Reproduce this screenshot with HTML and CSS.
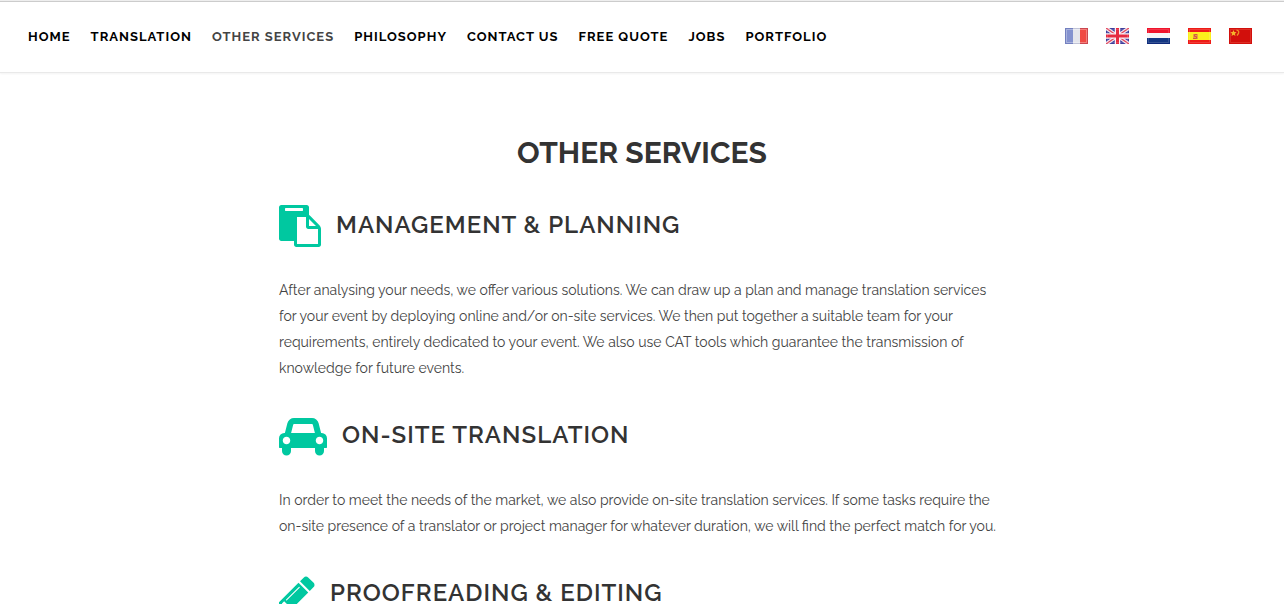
FILE: index.html
```html
<!DOCTYPE html>
<html lang="en">
<head>
<meta charset="utf-8">
<meta name="viewport" content="width=device-width, initial-scale=1">
<title>Other Services</title>
<link rel="stylesheet" href="styles.css">
</head>
<body>
<header class="site-header">
  <nav class="menu" aria-label="Main">
    <a href="#home">HOME</a>
    <a href="#translation">TRANSLATION</a>
    <a href="#services" class="current" aria-current="page">OTHER SERVICES</a>
    <a href="#philosophy">PHILOSOPHY</a>
    <a href="#contact">CONTACT US</a>
    <a href="#quote">FREE QUOTE</a>
    <a href="#jobs">JOBS</a>
    <a href="#portfolio">PORTFOLIO</a>
  </nav>
  <nav class="languages" aria-label="Language">
    <a href="#fr" aria-label="Français">
      <svg class="flag" viewBox="0 0 23 16"><path fill="#8492cf" d="M0 0h8v16H0z"/><path fill="#e4e5ec" d="M8 0h7v16H8z"/><path fill="#f04a44" d="M15 0h8v16h-8z"/><path fill="none" stroke="#fff" stroke-opacity=".3" d="M1.500 1.500h20v13h-20z"/><path fill="none" stroke="#333a80" stroke-opacity=".2" d="M.5.5h22v15H.5z"/></svg>
    </a>
    <a href="#en" aria-label="English">
      <svg class="flag" viewBox="0 0 23 16"><path fill="#3e3e9c" d="M0 0h23v16H0z"/><path stroke="#f3e6ee" stroke-width="3.600" d="M0 0l23 16M23 0L0 16"/><path stroke="#e2455a" stroke-width="1.300" d="M0 0l23 16M23 0L0 16"/><path stroke="#fbf0f4" stroke-width="5.500" d="M11.500 0v16M0 8h23"/><path stroke="#e52a40" stroke-width="3" d="M11.500 0v16M0 8h23"/><path fill="none" stroke="#fff" stroke-opacity=".15" d="M1.500 1.500h20v13h-20z"/></svg>
    </a>
    <a href="#nl" aria-label="Nederlands">
      <svg class="flag" viewBox="0 0 23 16"><path fill="#f0142c" d="M0 0h23v5H0z"/><path fill="#f5f5f7" d="M0 5h23v5H0z"/><path fill="#133682" d="M0 10h23v6H0z"/><path fill="none" stroke="#fff" stroke-opacity=".15" d="M1.500 1.500h20v13h-20z"/><path fill="none" stroke="#000060" stroke-opacity=".25" d="M0 15.500h23"/></svg>
    </a>
    <a href="#es" aria-label="Español">
      <svg class="flag" viewBox="0 0 23 16"><path fill="#ee1b16" d="M0 0h23v16H0z"/><path fill="#fbf01c" d="M0 4h23v8H0z"/><path fill="#eda43a" d="M5 6h5v5H5z"/><path fill="none" stroke="#d05a45" d="M9 6.500H6.500v2h2v2H5"/><path fill="none" stroke="#fff" stroke-opacity=".15" d="M1.500 1.500h20v13h-20z"/></svg>
    </a>
    <a href="#zh" aria-label="中文">
      <svg class="flag" viewBox="0 0 23 16"><path fill="#d20f0c" d="M0 0h23v16H0z"/><path fill="#f5b62b" d="M4.500 2l.9 2.100 2.200.2-1.700 1.400.6 2.300-2-1.200-2 1.200.6-2.300-1.700-1.400 2.200-.2z"/><path fill="none" stroke="#ef8d24" stroke-width="1.300" d="M7.500 2.200q3 .3 2 3.300L8 7.500"/><path fill="none" stroke="#ff8a70" stroke-opacity=".25" d="M1.500 1.500h20v13h-20z"/></svg>
    </a>
  </nav>
</header>
<main class="content">
  <h1>OTHER SERVICES</h1>
  <section class="service">
    <div class="service-title">
      <svg class="icon" viewBox="0 0 1792 1792" aria-hidden="true"><path d="M768 1664h896v-640h-416q-40 0-68-28t-28-68v-416h-384v1152zm256-1440v-64q0-13-9.500-22.500t-22.500-9.500h-704q-13 0-22.500 9.500t-9.500 22.500v64q0 13 9.500 22.500t22.500 9.500h704q13 0 22.500-9.500t9.500-22.500zm256 672h299l-299-299v299zm512 128v672q0 40-28 68t-68 28h-960q-40 0-68-28t-28-68v-160h-544q-40 0-68-28t-28-68v-1344q0-40 28-68t68-28h1088q40 0 68 28t28 68v328q21 13 36 28l408 408q28 28 48 76t20 88z"/></svg>
      <h2>MANAGEMENT &amp; PLANNING</h2>
    </div>
    <p>After analysing your needs, we offer various solutions. We can draw up a plan and manage translation services for your event by deploying online and/or on-site services. We then put together a suitable team for your requirements, entirely dedicated to your event. We also use CAT tools which guarantee the transmission of knowledge for future events.</p>
  </section>
  <section class="service">
    <div class="service-title">
      <svg class="icon" viewBox="0 0 2048 1792" aria-hidden="true"><path d="M480 1088q0-66-47-113t-113-47-113 47-47 113 47 113 113 47 113-47 47-113zm36-320h1016l-89-357q-2-8-14-17.500t-21-9.500h-768q-9 0-21 9.500t-14 17.500zm1372 320q0-66-47-113t-113-47-113 47-47 113 47 113 113 47 113-47 47-113zm160-96v384q0 14-9 23t-23 9h-96v128q0 80-56 136t-136 56-136-56-56-136v-128h-1024v128q0 80-56 136t-136 56-136-56-56-136v-128h-96q-14 0-23-9t-9-23v-384q0-93 65.500-158.500t158.500-65.500h28l105-419q23-94 104-157.500t179-63.500h768q98 0 179 63.500t104 157.500l105 419h28q93 0 158.500 65.500t65.500 158.500z"/></svg>
      <h2>ON-SITE TRANSLATION</h2>
    </div>
    <p>In order to meet the needs of the market, we also provide on-site translation services. If some tasks require the on-site presence of a translator or project manager for whatever duration, we will find the perfect match for you.</p>
  </section>
  <section class="service">
    <div class="service-title">
      <svg class="icon" viewBox="128 0 1536 1792" aria-hidden="true"><path d="M491 1536l91-91-235-235-91 91v107h128v128h107zm523-928q0-22-22-22-10 0-17 7l-542 542q-7 7-7 17 0 22 22 22 10 0 17-7l542-542q7-7 7-17zm-54-192l416 416-832 832h-416v-416zm683 96q0 53-37 90l-166 166-416-416 166-165q36-38 90-38 53 0 91 38l235 234q37 39 37 91z"/></svg>
      <h2>PROOFREADING &amp; EDITING</h2>
    </div>
  </section>
</main>
</body>
</html>
```
FILE: styles.css
```css
* {
  box-sizing: border-box;
}

html {
  overflow: hidden;
}

body {
  margin: 0;
  border-top: 1px solid #eee;
  background: #fff;
  color: #444;
  font-family: Raleway, Lato, sans-serif;
  font-size: 14px;
  line-height: 26px;
}

.site-header {
  display: flex;
  align-items: center;
  justify-content: space-between;
  padding: 22px 32px 22px 28px;
  border-top: 1px solid #ccc;
  border-bottom: 1px solid #e9e9e9;
  box-shadow: 0 1px 2px #0000000d;
}

.menu {
  display: flex;
  flex-wrap: wrap;
  gap: 0 20px;
}

.menu a {
  color: #000;
  font-size: 13px;
  font-weight: 700;
  letter-spacing: 1px;
  text-decoration: none;
}

.menu .current {
  color: #444;
}

.languages {
  display: flex;
  gap: 18px;
  padding-bottom: 2px;
}

.languages a {
  display: flex;
}

.flag {
  width: 23px;
  height: 16px;
}

.content {
  max-width: 726px;
  margin: 0 auto;
  padding: 60px 0;
}

h1 {
  margin: 0 0 32px;
  color: #333;
  font-size: 30px;
  font-weight: 700;
  line-height: 40px;
  text-align: center;
}

.service {
  margin-bottom: 34px;
}

.service-title {
  display: flex;
  align-items: flex-start;
  gap: 15px;
  margin-bottom: 30px;
}

.icon {
  height: 42px;
  fill: #00c8a0;
}

h2 {
  margin: 0;
  color: #333;
  font-size: 24px;
  font-weight: 600;
  letter-spacing: 1px;
  line-height: 40px;
}

p {
  margin: 0;
}
```
